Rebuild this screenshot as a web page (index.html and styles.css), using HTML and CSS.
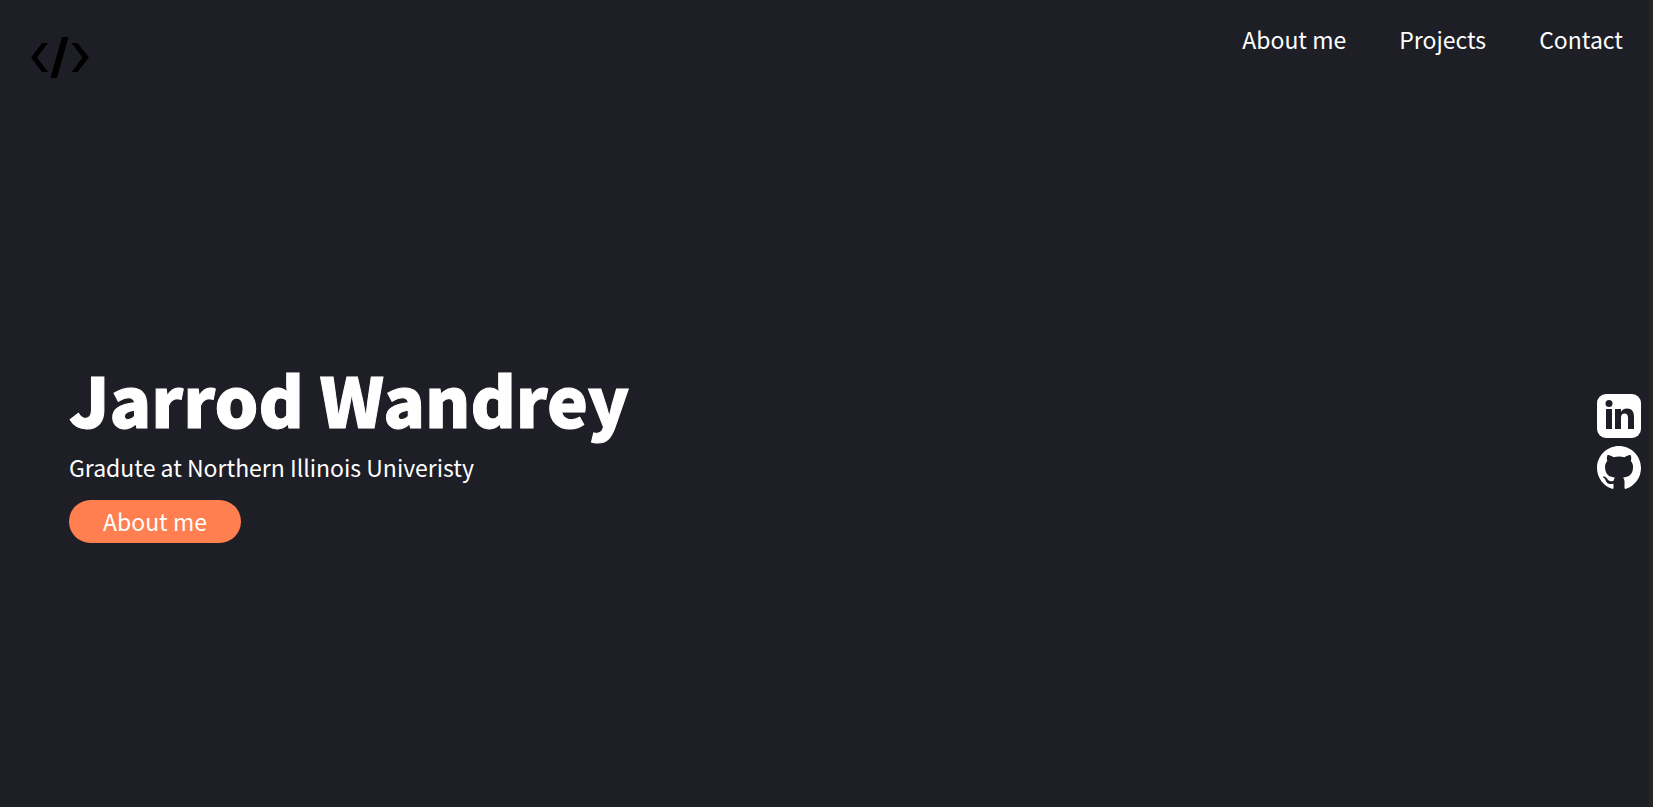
FILE: index.html
```html
<!DOCTYPE html>
<html lang="en">
<head>
<meta charset="utf-8">
<title>Jarrod Wandrey</title>
<link rel="stylesheet" href="styles.css">
</head>
<body>
<header class="header">
  <a class="logo" href="#" aria-label="Home">
    <svg viewBox="0 0 58 41" width="58" height="41" aria-hidden="true"><path d="M11 6h6L6 20.500l11 14.500h-6L0 20.500zM31 0h6.500L26 41h-6.500zM40.500 6h6L58 20.500 46.500 35h-6l11-14.500z"/></svg>
  </a>
  <nav class="nav">
    <a href="#about">About me</a>
    <a href="#projects">Projects</a>
    <a href="#contact">Contact</a>
  </nav>
</header>
<main class="hero">
  <h1 class="title">Jarrod Wandrey</h1>
  <p class="subtitle">Gradute at Northern Illinois Univeristy</p>
  <a class="button" href="#about">About me</a>
</main>
<aside class="social">
  <a href="#linkedin" aria-label="LinkedIn">
    <svg viewBox="0 0 44 44" width="44" height="44" aria-hidden="true"><rect width="44" height="44" rx="9"/><g class="cut"><circle cx="12" cy="9.500" r="3.500"/><path d="M9 15h6v20H9zM18 15h6v3c1-2 3-3.500 6-3.500 5 0 7 3 7 8.500v12h-6V24c0-3-1-4.500-3.500-4.500S24 21 24 24v11h-6z"/></g></svg>
  </a>
  <a href="#github" aria-label="GitHub">
    <svg viewBox="0 0 16 16" width="44" height="44" aria-hidden="true"><path d="M8 0C3.580 0 0 3.580 0 8c0 3.540 2.290 6.530 5.470 7.590.4.070.55-.17.55-.38 0-.19-.01-.82-.01-1.490-2.010.37-2.530-.49-2.690-.94-.09-.23-.48-.94-.82-1.130-.28-.15-.68-.52-.01-.53.63-.01 1.080.58 1.230.82.72 1.210 1.870.87 2.330.66.07-.52.28-.87.51-1.070-1.780-.2-3.640-.89-3.640-3.950 0-.87.31-1.590.82-2.150-.08-.2-.36-1.020.08-2.120 0 0 .67-.21 2.200.82.640-.18 1.320-.27 2-.27s1.360.09 2 .27c1.530-1.040 2.200-.82 2.200-.82.440 1.100.16 1.920.08 2.120.51.56.82 1.270.82 2.150 0 3.070-1.870 3.750-3.650 3.950.29.25.54.73.54 1.480 0 1.070-.01 1.930-.01 2.200 0 .21.15.46.55.38A8.010 8.010 0 0 0 16 8c0-4.420-3.580-8-8-8z"/></svg>
  </a>
</aside>
</body>
</html>
```
FILE: styles.css
```css
* { box-sizing: border-box; margin: 0; }
body {
  min-height: 100vh;
  display: flex;
  flex-direction: column;
  position: relative;
  background: #1e1e26;
  border-right: 4px solid #26261f;
  color: #fff;
  font: 23px/36px "Noto Sans CJK JP", "Noto Sans", sans-serif;
}
a { color: inherit; text-decoration: none; }
svg { display: block; }
.header {
  display: flex;
  justify-content: space-between;
  align-items: flex-start;
  padding: 21px 26px 0 31px;
}
.logo { padding-top: 16px; }
.nav { display: flex; gap: 53px; }
.hero {
  padding: 274px 69px 0;
}
.title {
  margin-bottom: 5px;
  font-size: 69px;
  line-height: 92px;
  font-weight: 900;
  -webkit-text-stroke: 1px #fff;
}
.subtitle { margin-bottom: 15px; }
.button {
  display: inline-block;
  padding: 3px 34px 4px;
  border-radius: 22px;
  background: #ff7f50;
}
.social {
  position: absolute;
  right: 8px;
  top: 50%;
  display: grid;
  gap: 8px;
  margin-top: -10px;
  fill: #fff;
}
.cut { fill: #1e1e26; }
```
